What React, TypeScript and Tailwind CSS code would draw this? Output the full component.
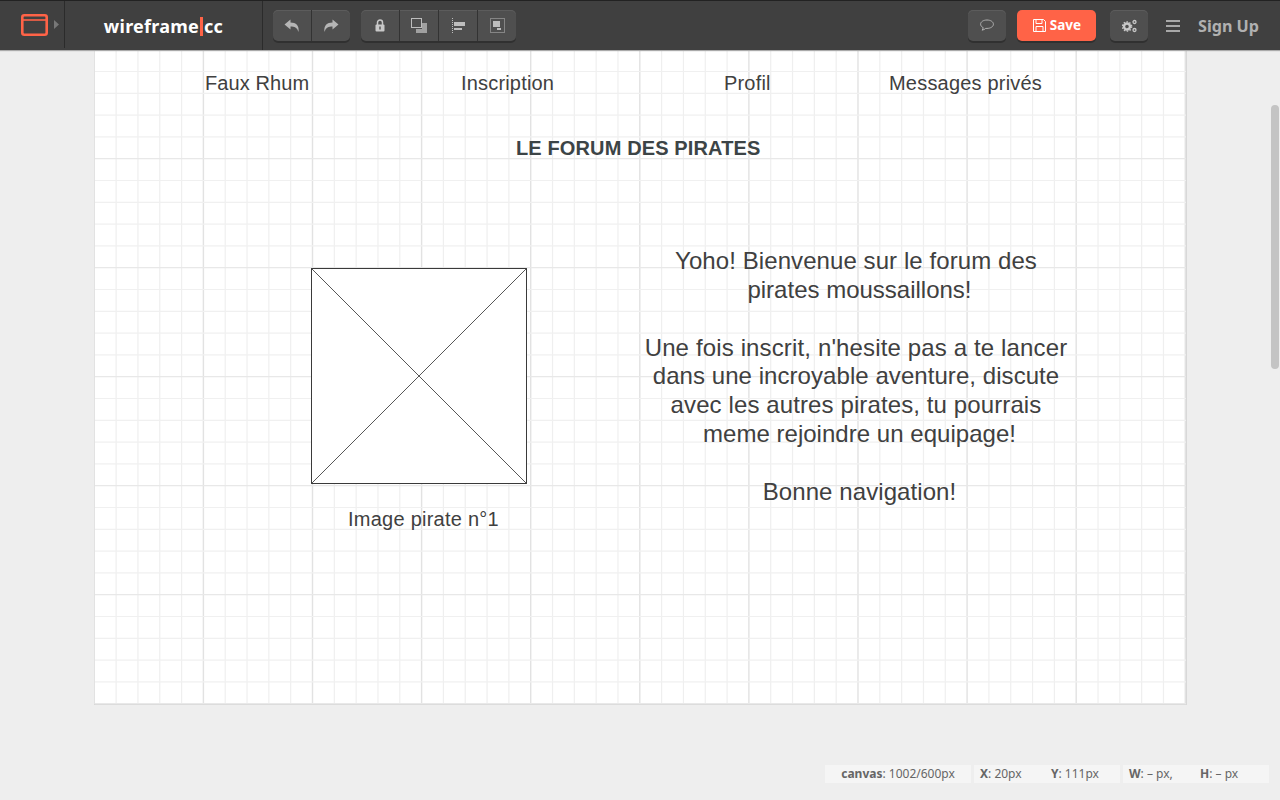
import React from "react";

const sans = "font-['Liberation_Sans',Arial,sans-serif]";
const ui = "font-['Noto_Sans',sans-serif]";

function Btn({ children, className = "" }: { children: React.ReactNode; className?: string }) {
  return <div className={`flex h-[31px] items-center justify-center ${className}`}>{children}</div>;
}

const shell = "flex rounded-[5px] bg-[#4f4f4f] shadow-[0_2px_0_#303030,inset_0_1px_0_#5c5c5c]";
const steps = Array.from({ length: 51 }, (_, k) => k);

function Grid() {
  return (
    <svg className="absolute left-0 top-0" width="1093" height="655" viewBox="94 50 1093 655">
      {steps.map((k) => {
        const x = 94.3 + k * 21.82;
        return <path key={`v${k}`} d={`M${x} 50V704`} stroke={k % 5 === 0 ? "#e2e2e2" : "#efefef"} strokeWidth={k % 5 === 0 ? 1.4 : 1.2} />;
      })}
      {steps.slice(0, 31).map((k) => {
        const y = 49.7 + k * 21.8;
        return <path key={`h${k}`} d={`M95 ${y}H1186`} stroke={k % 5 === 0 ? "#e8e8e8" : "#f0f0f0"} strokeWidth={1.2} />;
      })}
    </svg>
  );
}

export default function App() {
  return (
    <div className={`flex h-[800px] w-[1280px] flex-col overflow-hidden bg-[#eeeeee] ${sans}`}>
      <header className="relative z-10 flex h-[50px] shrink-0 items-center border-t border-[#222] bg-[#404040] shadow-[0_1px_1px_#aaa]">
        <div className="flex h-[47px] w-[65px] items-center self-start border-r border-[#2b2b2b] pl-[21px]">
          <svg width="27" height="22" viewBox="0 0 27 22" fill="none">
            <rect x="1.300" y="1.300" width="24.400" height="19.400" rx="2" stroke="#ff6347" strokeWidth="2.600" />
            <path d="M1 6h25" stroke="#ff6347" strokeWidth="1.600" />
          </svg>
          <svg width="5" height="9" viewBox="0 0 5 9" className="ml-[6px]"><path d="M0 0l5 4.500-5 4.500z" fill="#777" /></svg>
        </div>
        <div className={`flex h-[49px] w-[198px] items-center justify-center border-r border-[#2b2b2b] pt-[1px] text-[18px] font-bold tracking-[0.25px] text-white ${ui}`}>
          wireframe<span className="mx-px h-[19px] w-[3px] bg-[#ff6347]" />cc
        </div>
        <div className={`ml-[10px] w-[77px] ${shell}`}>
          <Btn className="w-[39px] border-r border-[#333]">
            <svg width="16" height="14" viewBox="0 0 16 14"><path d="M6.500 0.500L0.500 5.500l6 5V7.500c4 0 6.500 .7 8 5.500C15.500 6.500 12 3.500 6.500 3.500z" fill="#b5b5b5" /></svg>
          </Btn>
          <Btn className="w-[38px]">
            <svg width="16" height="14" viewBox="0 0 16 14"><path d="M9.500 0.500l6 5-6 5V7.500c-4 0-6.500 .7-8 5.500C.5 6.500 4 3.500 9.500 3.500z" fill="#b5b5b5" /></svg>
          </Btn>
        </div>
        <div className={`ml-[11px] w-[155px] ${shell}`}>
          <Btn className="w-[39px] border-r border-[#333]">
            <svg width="10" height="13" viewBox="0 0 10 13"><path d="M2.500 6V3.500a2.500 2.500 0 0 1 5 0V6" fill="none" stroke="#c8c8c8" strokeWidth="1.500" /><rect x="0.500" y="5.500" width="9" height="7" rx="1" fill="#c8c8c8" /><rect x="4.300" y="7.500" width="1.400" height="3" fill="#4f4f4f" /></svg>
          </Btn>
          <Btn className="w-[39px] border-r border-[#333]">
            <svg width="16" height="15" viewBox="0 0 16 15"><path d="M11 5h5v10H5v-4h6z" fill="#a0a0a0" /><rect x="0.500" y="0.500" width="10" height="9" fill="none" stroke="#bdbdbd" /></svg>
          </Btn>
          <Btn className="w-[39px] border-r border-[#333]">
            <svg width="13" height="16" viewBox="0 0 13 16"><path d="M.5 0v16" stroke="#bdbdbd" strokeDasharray="1 1" /><rect x="2" y="4" width="11" height="4" fill="#bdbdbd" /><rect x="2" y="10" width="8" height="2" fill="#bdbdbd" /></svg>
          </Btn>
          <Btn className="w-[38px]">
            <svg width="15" height="15" viewBox="0 0 15 15"><rect x="0.500" y="0.500" width="14" height="14" fill="none" stroke="#bdbdbd" strokeDasharray="1 1" /><rect x="3" y="3" width="7" height="6" fill="#bdbdbd" /><rect x="7" y="10" width="4" height="2" fill="#bdbdbd" /></svg>
          </Btn>
        </div>
        <div className="ml-auto flex items-center">
          <div className={`w-[38px] ${shell}`}>
            <Btn className="w-full">
              <svg width="14" height="13" viewBox="0 0 14 13" fill="none"><path d="M7 1C3.400 1 .6 2.800.6 5.200c0 1.500 1 2.700 2.600 3.400-.1 1-.5 1.800-1.100 2.600 1.500-.3 2.700-1 3.600-1.800H7c3.600 0 6.400-1.800 6.400-4.200S10.600 1 7 1z" stroke="#b0b0b0" /></svg>
            </Btn>
          </div>
          <div className={`ml-[11px] flex h-[31px] w-[79px] items-center justify-center gap-[4px] rounded-[5px] bg-[#ff6347] text-[13.500px] font-bold text-white shadow-[0_2px_0_#303030] ${ui}`}>
            <svg width="13" height="13" viewBox="0 0 13 13" fill="none"><path d="M.5.5h10l2 2v10H.5z" stroke="#fff" /><path d="M3 1v3.500h6V1M3 12V7.500h7V12" stroke="#fff" /></svg>
            Save
          </div>
          <div className={`ml-[14px] w-[38px] ${shell}`}>
            <Btn className="w-full">
              <svg width="15" height="14" viewBox="0 0 15 14" fill="none">
                <circle cx="5" cy="7.500" r="3" stroke="#c8c8c8" strokeWidth="2.400" />
                <circle cx="5" cy="7.500" r="4.700" stroke="#c8c8c8" strokeWidth="1.200" strokeDasharray="1.500 1.500" />
                <circle cx="12.500" cy="3" r="1.500" stroke="#c8c8c8" strokeWidth="1.300" />
                <circle cx="12.500" cy="11" r="1.500" stroke="#c8c8c8" strokeWidth="1.300" />
              </svg>
            </Btn>
          </div>
          <div className="ml-[18px] flex w-[14px] flex-col gap-[3px]">
            <span className="h-[2px] bg-[#a8a8a8]" /><span className="h-[2px] bg-[#a8a8a8]" /><span className="h-[2px] bg-[#a8a8a8]" />
          </div>
          <div className={`ml-[17.500px] mr-[21px] pt-[1px] text-[16.150px] font-bold text-[#b0b0b0] ${ui}`}>Sign Up</div>
        </div>
      </header>

      <div className="relative flex min-h-0 flex-1">
        <main className="relative ml-[94px] h-[655px] w-[1093px] border-r border-b border-l border-[#d8d8d8] bg-white text-[#404040]">
          <div className="absolute -left-px top-0"><Grid /></div>
          <span className="absolute left-[110px] top-[18px] text-[20px] tracking-[0.1px]">Faux Rhum</span>
          <span className="absolute left-[366px] top-[18px] text-[20px] tracking-[0.18px]">Inscription</span>
          <span className="absolute left-[629px] top-[18px] text-[20px] tracking-[0.18px]">Profil</span>
          <span className="absolute left-[794px] top-[18px] text-[20px] tracking-[0.2px]">Messages privés</span>
          <span className="absolute left-[421px] top-[83px] text-[20px] font-bold tracking-[0.13px] text-[#3c4446]">LE FORUM DES PIRATES</span>
          <svg className="absolute left-[216px] top-[218px]" width="216" height="216" viewBox="0 0 216 216">
            <rect x="0.500" y="0.500" width="215" height="215" fill="#fff" stroke="#3a3a3a" />
            <path d="M0 0L216 216M216 0L0 216" stroke="#444" strokeWidth="0.900" />
          </svg>
          <span className="absolute left-[253px] top-[454px] text-[20px] tracking-[0.25px]">Image pirate n°1</span>
          <div className="absolute left-[530px] top-[197.200px] w-[462px] text-center text-[24px] leading-[28.800px]">
            <p className="tracking-[0.08px]">Yoho! Bienvenue sur le forum des</p>
            <p className="pl-[7px]">pirates moussaillons!</p>
            <p className="h-[28.800px]" />
            <p className="tracking-[0.14px]">Une fois inscrit, n'hesite pas a te lancer</p>
            <p className="tracking-[0.06px]">dans une incroyable aventure, discute</p>
            <p className="tracking-[0.11px]">avec les autres pirates, tu pourrais</p>
            <p className="pl-[7px] tracking-[0.03px]">meme rejoindre un equipage!</p>
            <p className="h-[28.800px]" />
            <p className="pl-[7px] tracking-[0.08px]">Bonne navigation!</p>
          </div>
        </main>
        <div className="absolute right-[1px] top-[55px] h-[264px] w-[8px] rounded-[4px] bg-[#c4c4c4]" />
        <footer className={`absolute left-[825px] top-[715px] flex h-[18px] gap-[3px] text-[12px] text-[#666] ${ui}`}>
          <div className="flex w-[146px] items-center justify-center bg-[#f5f5f5]"><span><b>canvas</b>: 1002/600px</span></div>
          <div className="flex w-[146px] items-center bg-[#f5f5f5] pl-[6px]"><span className="w-[71px]"><b>X</b>: 20px</span><span><b>Y</b>: 111px</span></div>
          <div className="flex w-[146px] items-center bg-[#f5f5f5] pl-[6px]"><span className="w-[71px]"><b>W</b>: – px,</span><span><b>H</b>: – px</span></div>
        </footer>
      </div>
    </div>
  );
}
